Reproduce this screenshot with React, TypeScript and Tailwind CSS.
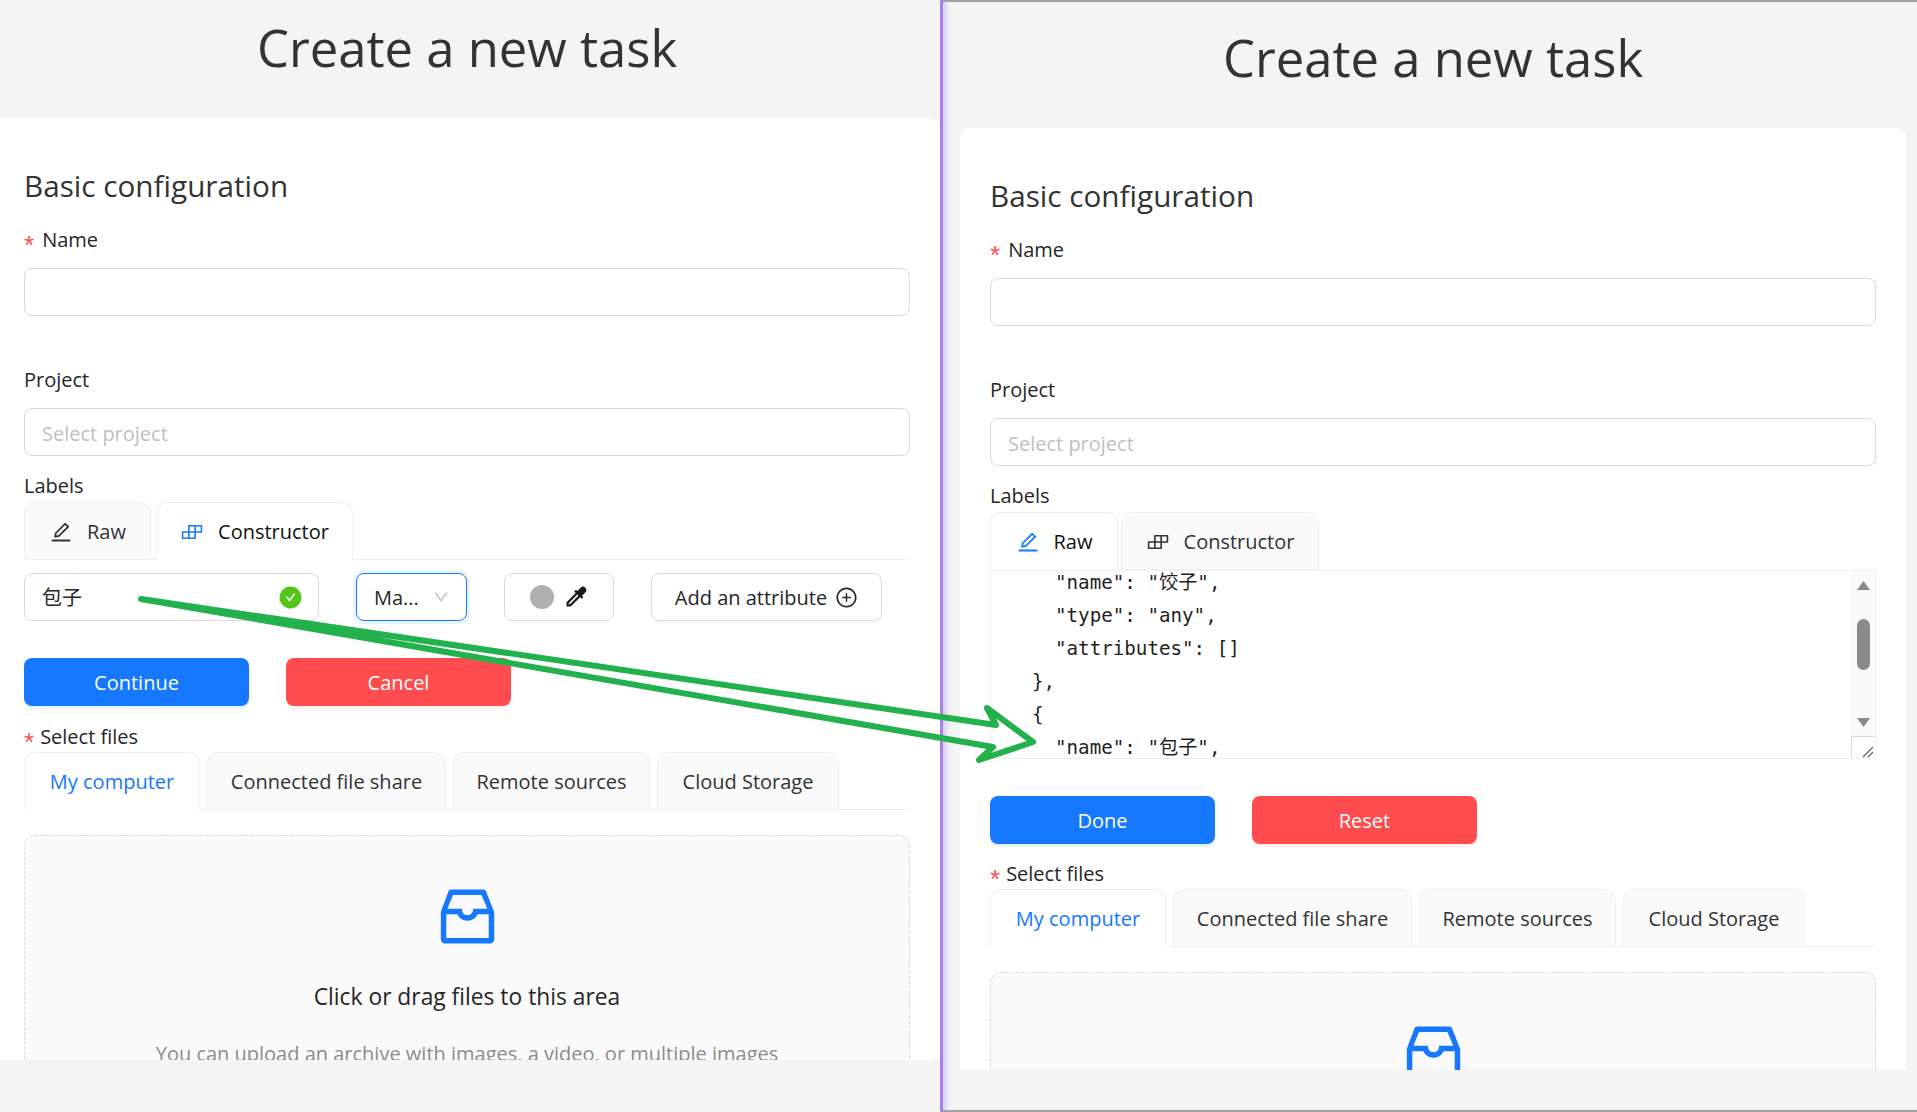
import React from "react";
import { AiOutlineEdit, AiOutlineBuild, AiOutlineInbox, AiOutlinePlusCircle, AiFillCheckCircle, AiOutlineDown } from "react-icons/ai";

const FONT = "font-['Open_Sans','Noto_Sans_CJK_SC',sans-serif]";

function Req({ tight }: { tight?: boolean }) {
  return <span className={`text-[#ff4d4f] font-['Liberation_Sans',sans-serif] text-[26px] leading-none pt-[10px] ${tight ? "mr-[6px]" : "mr-[8px]"}`}>*</span>;
}

function TabBtn({ active, icon, label, w, blue }: { active?: boolean; icon?: React.ReactNode; label: string; w: string; blue?: boolean }) {
  return (
    <div
      className={`${w} h-[58px] flex items-center justify-center gap-[14px] pt-[2px] rounded-t-[11px] border border-[#f0f0f0] text-[20px] ${
        active ? "bg-white border-b-white" : "bg-[#fafafa]"
      } ${blue && active ? "text-[#1677ff]" : active ? "text-[#111]" : "text-[#333]"} -mb-px shrink-0`}
    >
      {icon}
      <span>{label}</span>
    </div>
  );
}

function FileTabs() {
  return (
    <div className="flex gap-[7px] border-b border-[#f0f0f0] h-[58px] mt-[1px]">
      <TabBtn active blue label="My computer" w="w-[176px]" />
      <TabBtn label="Connected file share" w="w-[239px]" />
      <TabBtn label="Remote sources" w="w-[197px]" />
      <TabBtn label="Cloud Storage" w="w-[182px]" />
    </div>
  );
}

function Field({ label, required, placeholder, bottom }: { label: string; required?: boolean; placeholder?: string; bottom: string }) {
  return (
    <div className={bottom}>
      <div className="h-[28px] flex items-center text-[20px] text-[#262626]">
        {required && <Req />}
        {label}
      </div>
      <div className="mt-[14px] h-[48px] border border-[#d9d9d9] rounded-[8px] px-[17px] pt-[3px] flex items-center text-[20px] text-[#bfbfbf]">
        {placeholder}
      </div>
    </div>
  );
}

function RawEditor() {
  const lines: [string, string][] = [
    ["pl-[64px]", "\"name\": \"饺子\","],
    ["pl-[64px]", "\"type\": \"any\","],
    ["pl-[64px]", "\"attributes\": []"],
    ["pl-[41px]", "},"],
    ["pl-[41px]", "{"],
    ["pl-[64px]", "\"name\": \"包子\","],
  ];
  return (
    <div className="h-[189px] flex border-b border-r border-l border-[#f0f0f0] border-t overflow-hidden">
      <div className="flex-1 font-['DejaVu_Sans_Mono','Noto_Sans_CJK_SC',monospace] text-[19.2px] leading-[33px] text-[#1f1f1f] -mt-[5px] whitespace-pre">
        {lines.map(([pad, t], i) => (
          <div key={i} className={pad}>
            {t}
          </div>
        ))}
      </div>
      <div className="w-[24px] bg-[#fafafa] flex flex-col">
        <div className="h-[165px] flex flex-col items-center">
          <svg width="13" height="9" viewBox="0 0 13 9" className="mt-[10px]">
            <path d="M6.5 0 L13 9 L0 9 Z" fill="#8a8a8a" />
          </svg>
          <div className="w-[13px] h-[51px] rounded-full bg-[#8a8a8a] mt-[29px]" />
          <svg width="13" height="9" viewBox="0 0 13 9" className="mt-[48px]">
            <path d="M0 0 L13 0 L6.5 9 Z" fill="#8a8a8a" />
          </svg>
        </div>
        <div className="flex-1 bg-white border-t border-l border-[#d9d9d9] flex items-end justify-end">
          <svg width="14" height="14" viewBox="0 0 14 14">
            <path d="M2 13 L12 3 M7 13 L12 8" stroke="#666" strokeWidth="1.3" fill="none" />
          </svg>
        </div>
      </div>
    </div>
  );
}

function Dropzone({ showText }: { showText?: boolean }) {
  return (
    <div className="mt-[25px] border border-dashed border-[#d9d9d9] rounded-[11px] bg-[#fafafa] h-[400px] flex flex-col items-center">
      <AiOutlineInbox className="text-[#1677ff] text-[73px] mt-[44px] shrink-0" />
      {showText && (
        <>
          <div className="text-[22.8px] text-[#262626] mt-[28px] leading-[32px]">Click or drag files to this area</div>
          <div className="text-[20px] text-[#8c8c8c] mt-[27px] leading-[28px]">You can upload an archive with images, a video, or multiple images</div>
        </>
      )}
    </div>
  );
}

function ActionButtons({ ok, bad, top }: { ok: string; bad: string; top: string }) {
  return (
    <div className={`flex gap-[37px] ${top}`}>
      <div className="w-[225px] h-[48px] pt-[2px] rounded-[8px] bg-[#1677ff] text-white text-[20px] flex items-center justify-center shadow-[0_3px_0_rgba(5,145,255,0.1)]">{ok}</div>
      <div className="w-[225px] h-[48px] pt-[2px] rounded-[8px] bg-[#ff4d4f] text-white text-[20px] flex items-center justify-center shadow-[0_3px_0_rgba(255,38,5,0.06)]">{bad}</div>
    </div>
  );
}

function Common() {
  return (
    <>
      <h2 className="text-[29.7px] leading-[40px] text-[#333] font-normal">Basic configuration</h2>
      <div className="mt-[20px]">
        <Field label="Name" required bottom="mb-[48px]" />
        <div className="pt-[2px]">
          <Field label="Project" placeholder="Select project" bottom="mb-[16px]" />
        </div>
      </div>
      <div className="h-[28px] flex items-center text-[20px] text-[#262626]">Labels</div>
    </>
  );
}

function Dropper() {
  return (
    <svg width="27" height="27" viewBox="0 0 24 24" fill="#1a1a1a">
      <path d="M20.7 3.3a3 3 0 0 0-4.2 0l-2.9 2.9-1.2-1.2-1.6 1.6 1.4 1.4L4 16.2V20h3.8l8.2-8.2 1.4 1.4 1.6-1.6-1.2-1.2 2.9-2.9a3 3 0 0 0 0-4.2ZM7 18H6v-1l7.6-7.6 1 1Z" />
    </svg>
  );
}

function LeftPanel() {
  return (
    <div className="w-[940px] shrink-0 flex flex-col h-[1112px] bg-[#f4f4f4]">
      <h1 className="h-[118px] pt-[12px] pr-[6px] text-center text-[50.8px] leading-[72px] text-[#333] font-normal shrink-0">Create a new task</h1>
      <div className="h-[942px] bg-white rounded-tr-[11px] pl-[24px] pr-[30px] pt-[48px] overflow-hidden shrink-0">
        <Common />
        <div className="flex gap-[5px] border-b border-[#f0f0f0] h-[58px] mt-[2px]">
          <TabBtn label="Raw" w="w-[127px]" icon={<AiOutlineEdit className="text-[24px]" />} />
          <TabBtn active label="Constructor" w="w-[197px]" icon={<AiOutlineBuild className="text-[24px] text-[#1677ff]" />} />
        </div>
        <div className="flex mt-[13px] h-[48px] text-[20px] text-[#262626]">
          <div className="w-[295px] border border-[#d9d9d9] rounded-[8px] pl-[17px] pr-[15px] flex items-center justify-between shrink-0">
            <span className="pt-[2px]">包子</span>
            <AiFillCheckCircle className="text-[#52c41a] text-[25px]" />
          </div>
          <div className="ml-[37px] w-[111px] border border-[#1677ff] rounded-[8px] shadow-[0_0_0_3px_rgba(5,145,255,0.1)] pl-[17px] pr-[16px] flex items-center justify-between shrink-0">
            <span className="pt-[2px]">Ma...</span>
            <AiOutlineDown className="text-[#bfbfbf] text-[18px]" />
          </div>
          <div className="ml-[37px] w-[110px] border border-[#d9d9d9] rounded-[8px] shadow-[0_3px_0_rgba(0,0,0,0.02)] flex items-center justify-center gap-[8px] shrink-0">
            <span className="w-[24px] h-[24px] rounded-full bg-[#b0b0b0]" />
            <Dropper />
          </div>
          <div className="ml-[37px] w-[231px] border border-[#d9d9d9] rounded-[8px] shadow-[0_3px_0_rgba(0,0,0,0.02)] flex items-center justify-center gap-[8px] shrink-0">
            <span className="pt-[2px]">Add an attribute</span>
            <AiOutlinePlusCircle className="text-[23px]" />
          </div>
        </div>
        <ActionButtons ok="Continue" bad="Cancel" top="mt-[37px]" />
        <div className="h-[28px] flex items-center text-[20px] text-[#262626] mt-[17px]"><Req tight />Select files</div>
        <FileTabs />
        <Dropzone showText />
      </div>
    </div>
  );
}

function RightPanel() {
  return (
    <div className="flex-1 flex flex-col h-[1112px] bg-[#f4f4f4] border-l-[3px] border-l-[#a880e8] border-t-2 border-t-[#a0a0a0] border-b-2 border-b-[#a0a0a0] shadow-[inset_6px_0_4px_-2px_rgba(168,128,232,0.3)]">
      <h1 className="h-[126px] pt-[20px] text-center text-[50.8px] leading-[72px] text-[#333] font-normal shrink-0 pr-[11px] pl-[17px]">Create a new task</h1>
      <div className="flex flex-1 min-h-0 pl-[17px] pr-[11px]">
        <div className="h-[942px] w-full bg-white rounded-t-[11px] px-[30px] pt-[48px] overflow-hidden">
          <Common />
          <div className="flex gap-[3px] h-[51px] mt-[2px]">
            <TabBtn active label="Raw" w="w-[128px]" icon={<AiOutlineEdit className="text-[24px] text-[#1677ff]" />} />
            <TabBtn label="Constructor" w="w-[198px]" icon={<AiOutlineBuild className="text-[24px]" />} />
          </div>
          <div className="relative z-10 mt-[7px]">
            <RawEditor />
          </div>
          <ActionButtons ok="Done" bad="Reset" top="mt-[37px]" />
          <div className="h-[28px] flex items-center text-[20px] text-[#262626] mt-[16px]"><Req tight />Select files</div>
          <FileTabs />
          <Dropzone />
        </div>
      </div>
    </div>
  );
}

export default function App() {
  return (
    <div className={`relative w-[1917px] h-[1112px] overflow-hidden flex bg-[#f4f4f4] ${FONT}`}>
      <LeftPanel />
      <RightPanel />
      <svg className="absolute left-0 top-0 pointer-events-none z-20" width="1917" height="1112" viewBox="0 0 1917 1112">
        <path
          d="M141 599 L996 725 L987 708 L1033 742 L979 760 L993 747 Z"
          fill="none"
          stroke="#22b14c"
          strokeWidth="6"
          strokeLinejoin="round"
          strokeLinecap="round"
        />
      </svg>
    </div>
  );
}
